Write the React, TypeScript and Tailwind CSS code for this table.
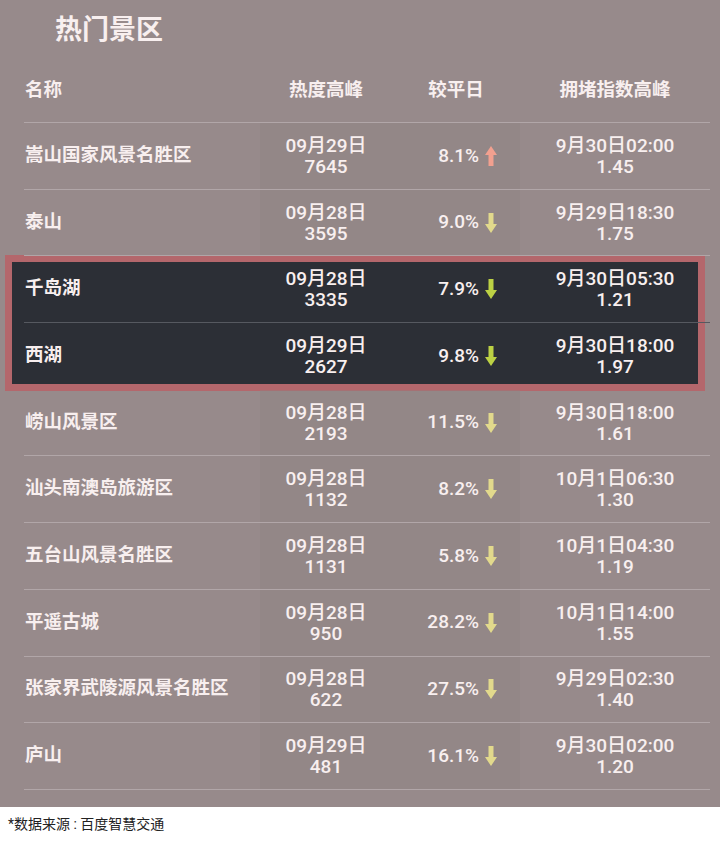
type Row = {
  name: string;
  day: string;
  heat: string;
  pct: string;
  up?: boolean;
  peak: string;
  index: string;
};

const rows: Row[] = [
  { name: "嵩山国家风景名胜区", day: "09月29日", heat: "7645", pct: "8.1%", up: true, peak: "9月30日02:00", index: "1.45" },
  { name: "泰山", day: "09月28日", heat: "3595", pct: "9.0%", peak: "9月29日18:30", index: "1.75" },
  { name: "千岛湖", day: "09月28日", heat: "3335", pct: "7.9%", peak: "9月30日05:30", index: "1.21" },
  { name: "西湖", day: "09月29日", heat: "2627", pct: "9.8%", peak: "9月30日18:00", index: "1.97" },
  { name: "崂山风景区", day: "09月28日", heat: "2193", pct: "11.5%", peak: "9月30日18:00", index: "1.61" },
  { name: "汕头南澳岛旅游区", day: "09月28日", heat: "1132", pct: "8.2%", peak: "10月1日06:30", index: "1.30" },
  { name: "五台山风景名胜区", day: "09月28日", heat: "1131", pct: "5.8%", peak: "10月1日04:30", index: "1.19" },
  { name: "平遥古城", day: "09月28日", heat: "950", pct: "28.2%", peak: "10月1日14:00", index: "1.55" },
  { name: "张家界武陵源风景名胜区", day: "09月28日", heat: "622", pct: "27.5%", peak: "9月29日02:30", index: "1.40" },
  { name: "庐山", day: "09月29日", heat: "481", pct: "16.1%", peak: "9月30日02:00", index: "1.20" },
];

function Arrow({ up, dark }: { up?: boolean; dark?: boolean }) {
  const color = up ? "#f2a08f" : dark ? "#bcd144" : "#e2d98c";
  return (
    <svg width="12" height="20" viewBox="0 0 12 20" className="shrink-0">
      {up ? (
        <>
          <polygon points="6,0 12,9 0,9" fill={color} />
          <rect x="3.5" y="9" width="5" height="11" fill={color} />
        </>
      ) : (
        <>
          <rect x="3.5" y="0" width="5" height="11" fill={color} />
          <polygon points="0,11 12,11 6,20" fill={color} />
        </>
      )}
    </svg>
  );
}

function DataRow({ row, dark, last }: { row: Row; dark?: boolean; last?: boolean }) {
  const line = dark ? (last ? "border-transparent" : "border-[#565960]") : "border-[#b1a6a8]";
  return (
    <div className={`relative z-10 grid h-[66.7px] grid-cols-[236px_132px_128px_1fr] border-b ${line}`}>
      <div className="flex items-center pl-[1px] text-[18.5px] font-semibold">{row.name}</div>
      <div
        className={`flex flex-col items-center justify-center text-[19px] leading-[21px] font-medium ${
          dark ? "" : "bg-[#8f8283]/40"
        }`}
      >
        <span>{row.day}</span>
        <span>{row.heat}</span>
      </div>
      <div
        className={`flex items-center justify-end gap-[6px] pr-[23px] text-[19px] font-medium ${
          dark ? "" : "bg-[#8f8283]/40"
        }`}
      >
        <span>{row.pct}</span>
        <Arrow up={row.up} dark={dark} />
      </div>
      <div className="flex flex-col items-center justify-center text-[19px] leading-[21px] font-medium">
        <span>{row.peak}</span>
        <span>{row.index}</span>
      </div>
    </div>
  );
}

export default function App() {
  return (
    <div
      className="w-[720px] bg-white"
      style={{ fontFamily: 'Roboto, "Noto Sans CJK SC", sans-serif' }}
    >
      <div className="bg-[#978a8b] pb-[17px] text-[#f8efef]">
        <div className="flex h-[60px] items-center pl-[55px] text-[27px] font-bold">热门景区</div>
        <div className="ml-[24px] mr-[10px]">
          <div className="grid h-[63px] grid-cols-[236px_132px_128px_1fr] items-center border-b border-[#b1a6a8] text-[18.5px] font-bold">
            <div className="pl-[1px]">名称</div>
            <div className="text-center">热度高峰</div>
            <div className="text-center">较平日</div>
            <div className="text-center">拥堵指数高峰</div>
          </div>
          {rows.slice(0, 2).map((r) => (
            <DataRow key={r.name} row={r} />
          ))}
          <div className="relative">
            <div className="absolute -top-[1px] -bottom-[1px] -left-[19px] right-[5px] z-0 border-[7px] border-[#b4676c] bg-[#2c2f36]" />
            <DataRow row={rows[2]} dark />
            <DataRow row={rows[3]} dark last />
          </div>
          {rows.slice(4).map((r) => (
            <DataRow key={r.name} row={r} />
          ))}
        </div>
      </div>
      <div className="flex h-[36px] items-center pl-[8px] text-[14px] text-[#222]">*数据来源 : 百度智慧交通</div>
    </div>
  );
}
